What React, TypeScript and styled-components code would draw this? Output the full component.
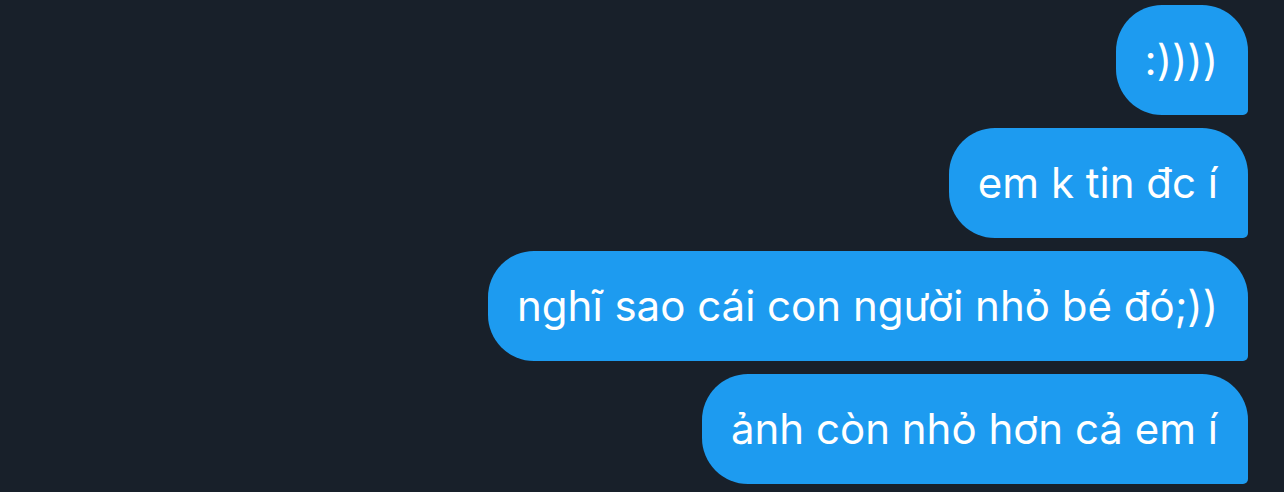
import React from "react";
import styled, { createGlobalStyle } from "styled-components";

const Global = createGlobalStyle`
  html, body { margin: 0; padding: 0; background: #18202a; }
  body { font-family: Inter, "Noto Sans", sans-serif; }
`;

const Thread = styled.div`
  display: flex;
  flex-direction: column;
  align-items: flex-end;
  gap: 13px;
  padding: 5px 36px 0 0;
  min-height: 492px;
  box-sizing: border-box;
  background: #18202a;
`;

const Bubble = styled.div`
  display: flex;
  align-items: center;
  box-sizing: border-box;
  height: 110px;
  padding: 0 30px 0 29px;
  background: #1d9bf0;
  color: #ffffff;
  font-size: 42px;
  line-height: 52px;
  letter-spacing: 0;
  border-radius: 46px 46px 5px 46px;
  white-space: nowrap;
`;

const messages = [
  ":))))",
  "em k tin đc í",
  "nghĩ sao cái con người nhỏ bé đó;))",
  "ảnh còn nhỏ hơn cả em í",
];

export default function App() {
  return (
    <>
      <Global />
      <Thread>
        {messages.map((m) => (
          <Bubble key={m}>{m}</Bubble>
        ))}
      </Thread>
    </>
  );
}
